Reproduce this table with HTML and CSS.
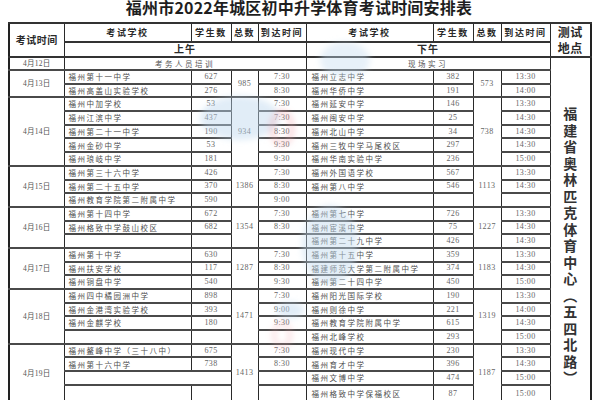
FILE: index.html
```html
<!DOCTYPE html>
<html lang="zh-CN">
<head>
<meta charset="utf-8">
<title>福州市2022年城区初中升学体育考试时间安排表</title>
<link rel="stylesheet" href="styles.css">
</head>
<body>
<div class="page">
  <h1 class="title">福州市2022年城区初中升学体育考试时间安排表</h1>
  <table class="sched">
    <colgroup>
      <col class="c-date"><col class="c-school"><col class="c-num"><col class="c-total"><col class="c-time">
      <col class="c-school2"><col class="c-num2"><col class="c-total2"><col class="c-time2"><col class="c-place">
    </colgroup>
    <thead>
      <tr class="h1">
        <th rowspan="2" class="th-date">考试时间</th>
        <th>考试学校</th><th>学生数</th><th>总数</th><th>到达时间</th>
        <th>考试学校</th><th>学生数</th><th>总数</th><th>到达时间</th>
        <th rowspan="2" class="th-place">测试<br>地点</th>
      </tr>
      <tr class="h2"><th colspan="4">上午</th><th colspan="4">下午</th></tr>
    </thead>
    <tbody>
      <tr class="r0"><td class="date">4月12日</td><td colspan="4" class="note">考务人员培训</td><td colspan="4" class="note">现场实习</td><td rowspan="25" class="place"><span>福建省奥林匹克体育中心（五四北路）</span></td></tr>

      <tr class="g"><td rowspan="2" class="date">4月13日</td><td class="sch">福州第十一中学</td><td class="num">627</td><td rowspan="2" class="tot">985</td><td class="tm">7:30</td><td class="sch sch2">福州立志中学</td><td class="num">382</td><td rowspan="2" class="tot">573</td><td class="tm">13:30</td></tr>
      <tr><td class="sch">福州高盖山实验学校</td><td class="num">276</td><td class="tm">8:30</td><td class="sch sch2">福州华侨中学</td><td class="num">191</td><td class="tm">14:00</td></tr>

      <tr class="g"><td rowspan="5" class="date">4月14日</td><td class="sch">福州中加学校</td><td class="num">53</td><td rowspan="5" class="tot">934</td><td class="tm">7:30</td><td class="sch sch2">福州延安中学</td><td class="num">146</td><td rowspan="5" class="tot">738</td><td class="tm">13:30</td></tr>
      <tr><td class="sch">福州江滨中学</td><td class="num">437</td><td class="tm">7:30</td><td class="sch sch2">福州闽安中学</td><td class="num">25</td><td class="tm">14:30</td></tr>
      <tr><td class="sch">福州第二十一中学</td><td class="num">190</td><td class="tm">8:30</td><td class="sch sch2">福州北山中学</td><td class="num">34</td><td class="tm">14:30</td></tr>
      <tr><td class="sch">福州金砂中学</td><td class="num">53</td><td class="tm">9:30</td><td class="sch sch2">福州三牧中学马尾校区</td><td class="num">297</td><td class="tm">14:30</td></tr>
      <tr><td class="sch">福州琅岐中学</td><td class="num">181</td><td class="tm">9:30</td><td class="sch sch2">福州华南实验中学</td><td class="num">236</td><td class="tm">15:00</td></tr>

      <tr class="g"><td rowspan="3" class="date">4月15日</td><td class="sch">福州第三十六中学</td><td class="num">426</td><td rowspan="3" class="tot">1386</td><td class="tm">7:30</td><td class="sch sch2">福州外国语学校</td><td class="num">567</td><td rowspan="3" class="tot">1113</td><td class="tm">13:30</td></tr>
      <tr><td class="sch">福州第二十五中学</td><td class="num">370</td><td class="tm">8:30</td><td class="sch sch2">福州第八中学</td><td class="num">546</td><td class="tm">14:30</td></tr>
      <tr><td class="sch">福州教育学院第二附属中学</td><td class="num">590</td><td class="tm">9:00</td><td class="sch sch2"></td><td class="num"></td><td class="tm"></td></tr>

      <tr class="g"><td rowspan="3" class="date">4月16日</td><td class="sch">福州第十四中学</td><td class="num">672</td><td rowspan="3" class="tot">1354</td><td class="tm">7:30</td><td class="sch sch2">福州第七中学</td><td class="num">726</td><td rowspan="3" class="tot">1227</td><td class="tm">13:30</td></tr>
      <tr><td class="sch">福州格致中学鼓山校区</td><td class="num">682</td><td class="tm">8:30</td><td class="sch sch2">福州宦溪中学</td><td class="num">75</td><td class="tm">14:30</td></tr>
      <tr><td class="sch"></td><td class="num"></td><td class="tm"></td><td class="sch sch2">福州第二十九中学</td><td class="num">426</td><td class="tm">14:30</td></tr>

      <tr class="g"><td rowspan="3" class="date">4月17日</td><td class="sch">福州第十中学</td><td class="num">630</td><td rowspan="3" class="tot">1287</td><td class="tm">7:30</td><td class="sch sch2">福州第十五中学</td><td class="num">359</td><td rowspan="3" class="tot">1183</td><td class="tm">13:30</td></tr>
      <tr><td class="sch">福州扶安学校</td><td class="num">117</td><td class="tm">8:30</td><td class="sch sch2">福建师范大学第二附属中学</td><td class="num">374</td><td class="tm">14:30</td></tr>
      <tr><td class="sch">福州铜盘中学</td><td class="num">540</td><td class="tm">9:30</td><td class="sch sch2">福州第二十四中学</td><td class="num">450</td><td class="tm">15:00</td></tr>

      <tr class="g"><td rowspan="4" class="date">4月18日</td><td class="sch">福州四中橘园洲中学</td><td class="num">898</td><td rowspan="4" class="tot">1471</td><td class="tm">7:30</td><td class="sch sch2">福州阳光国际学校</td><td class="num">190</td><td rowspan="4" class="tot">1319</td><td class="tm">13:30</td></tr>
      <tr><td class="sch">福州金港湾实验学校</td><td class="num">393</td><td class="tm">9:00</td><td class="sch sch2">福州则徐中学</td><td class="num">221</td><td class="tm">14:00</td></tr>
      <tr><td class="sch">福州金麒学校</td><td class="num">180</td><td class="tm">9:30</td><td class="sch sch2">福州教育学院附属中学</td><td class="num">615</td><td class="tm">14:30</td></tr>
      <tr><td class="sch"></td><td class="num"></td><td class="tm"></td><td class="sch sch2">福州北峰学校</td><td class="num">293</td><td class="tm">15:00</td></tr>

      <tr class="g"><td rowspan="4" class="date">4月19日</td><td class="sch">福州鳌峰中学（三十八中）</td><td class="num">675</td><td rowspan="4" class="tot">1413</td><td class="tm">7:30</td><td class="sch sch2">福州现代中学</td><td class="num">230</td><td rowspan="4" class="tot">1187</td><td class="tm">13:30</td></tr>
      <tr><td class="sch">福州第十六中学</td><td class="num">738</td><td class="tm">8:30</td><td class="sch sch2">福州育才中学</td><td class="num">396</td><td class="tm">14:30</td></tr>
      <tr><td class="sch" colspan="2"></td><td class="tm"></td><td class="sch sch2">福州文博中学</td><td class="num">474</td><td class="tm">15:00</td></tr>
      <tr class="last"><td class="sch"></td><td class="num"></td><td class="tm"></td><td class="sch sch2">福州格致中学保福校区</td><td class="num">87</td><td class="tm">15:00</td></tr>
    </tbody>
  </table>

  <svg class="wm" width="600" height="400" viewBox="0 0 600 400" aria-hidden="true">
    <defs>
      <filter id="soft" x="-50%" y="-50%" width="200%" height="200%"><feGaussianBlur stdDeviation="3"/></filter>
    </defs>
    <g filter="url(#soft)">
      <ellipse cx="240" cy="118" rx="40" ry="22" fill="#bcd6ee" opacity="0.45"/>
      <ellipse cx="282" cy="128" rx="10" ry="16" fill="none" stroke="#f2a8ae" stroke-width="4" opacity="0.55"/>
      <ellipse cx="345" cy="60" rx="25" ry="18" fill="#c4dcef" opacity="0.4"/>
      <ellipse cx="330" cy="245" rx="28" ry="40" fill="#c2daee" opacity="0.45"/>
      <ellipse cx="290" cy="310" rx="14" ry="8" fill="#bcd6ee" opacity="0.45"/>
      <ellipse cx="282" cy="335" rx="8" ry="12" fill="none" stroke="#f2a8ae" stroke-width="3" opacity="0.5"/>
    </g>
  </svg>
</div>
</body>
</html>
```

FILE: styles.css
```css
html, body {
  margin: 0;
  padding: 0;
  background: #ffffff;
}

body {
  width: 600px;
  height: 400px;
  overflow: hidden;
  font-family: "Liberation Serif", "Noto Sans CJK SC", serif;
  color: #555;
}

.page {
  position: relative;
  padding-left: 8px;
}

.title {
  margin: 0;
  width: 582px;
  height: 22px;
  font: 700 16px/15px "Noto Sans CJK SC", sans-serif;
  color: #1e1e1e;
  text-align: center;
  letter-spacing: 0.2px;
}

.sched {
  border-collapse: collapse;
  table-layout: fixed;
  width: 582px;
  border: 2px solid #222;
}

.c-date { width: 55px; }
.c-school { width: 127px; }
.c-num { width: 40px; }
.c-total { width: 27px; }
.c-time { width: 48px; }
.c-school2 { width: 127px; }
.c-num2 { width: 40px; }
.c-total2 { width: 28px; }
.c-time2 { width: 49px; }
.c-place { width: 41px; }

.sched th,
.sched td {
  border: 1px solid #2a2a2a;
  padding: 0;
  text-align: center;
  vertical-align: middle;
  white-space: nowrap;
  overflow: hidden;
}

.sched th {
  font: 700 9px/1 "Noto Sans CJK SC", sans-serif;
  letter-spacing: 1.6px;
  color: #2a2a2a;
  border-top: 2px solid #333;
  border-bottom: 2px solid #333;
}

.h1 { height: 18px; }
.h2 { height: 15px; }

.h2 th {
  font-size: 10px;
  letter-spacing: 1px;
}

.sched .th-date {
  font-size: 10px;
  letter-spacing: 0.5px;
}

.sched .th-place {
  font-size: 12px;
  line-height: 16px;
  letter-spacing: 0.5px;
}

.sched tbody td {
  border-top: 2px solid #4a4a4a;
  border-bottom: 2px solid #4a4a4a;
  font-size: 7.5px;
  line-height: 1;
}

.sched tbody tr { height: 13.7px; }
.sched tbody tr.r0 { height: 13px; }
.sched tbody tr.last { height: 18px; }

.sched tbody tr.g td {
  border-top: 2px solid #111;
}

.date {
  font-size: 8px;
  letter-spacing: 0.3px;
  color: #555;
}

.note {
  font-family: "Noto Sans CJK SC", sans-serif;
  letter-spacing: 2.5px;
  color: #555;
}

.sch {
  text-align: left !important;
  padding-left: 4px !important;
  font-family: "Noto Sans CJK SC", sans-serif;
  letter-spacing: 1.5px;
  color: #4e4e4e;
}

.sch2 {
  padding-left: 5px !important;
}

.num,
.tot,
.tm {
  font-size: 8px !important;
  letter-spacing: 0.4px;
  color: #666;
}

.place {
  vertical-align: top !important;
  padding-top: 49px !important;
  border-top: 2px solid #333 !important;
}

.place span {
  display: inline-block;
  writing-mode: vertical-rl;
  font: 700 14px/14px "Noto Sans CJK SC", sans-serif;
  letter-spacing: 2.5px;
  color: #333;
}

.wm {
  position: absolute;
  left: 0;
  top: 0;
  pointer-events: none;
}
```
